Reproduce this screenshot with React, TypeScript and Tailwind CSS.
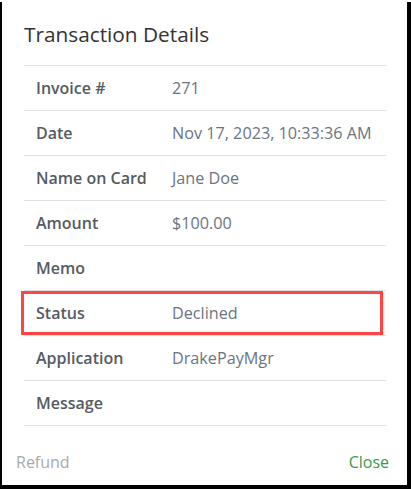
import React from "react";

const rows: { label: string; value: string; highlight?: boolean }[] = [
  { label: "Invoice #", value: "271" },
  { label: "Date", value: "Nov 17, 2023, 10:33:36 AM" },
  { label: "Name on Card", value: "Jane Doe" },
  { label: "Amount", value: "$100.00" },
  { label: "Memo", value: "" },
  { label: "Status", value: "Declined", highlight: true },
  { label: "Application", value: "DrakePayMgr" },
  { label: "Message", value: "" },
];

export default function App() {
  return (
    <div
      className="w-[411px] h-[489px] bg-black"
      style={{ fontFamily: '"Open Sans", "Noto Sans", sans-serif' }}
    >
      <div className="ml-[2px] mt-[2px] w-[405px] h-[483px] bg-white flex flex-col">
        <div className="h-[63px] flex items-center pl-[22px] pt-[2px]">
          <h1 className="text-[20.8px] text-[#333333] leading-none">Transaction Details</h1>
        </div>
        <div className="ml-[22px] w-[362px] border-t border-[#dee2e6]">
          {rows.map((r) => (
            <div
              key={r.label}
              className="relative h-[45px] border-b border-[#dee2e6] flex items-center"
            >
              <div className="w-[148px] pl-[12px] text-[16px] font-semibold text-[#555b61]">
                {r.label}
              </div>
              <div className="text-[16.2px] text-[#6c7480]">{r.value}</div>
              {r.highlight && (
                <div className="absolute left-[-3px] top-[0px] w-[362px] h-[44px] border-[3px] border-[#ff4444]" />
              )}
            </div>
          ))}
        </div>
        <div className="flex items-center justify-between pl-[14px] pr-[18px] h-[58px] pt-[14px]">
          <span className="text-[16px] text-[#aaaaaa]">Refund</span>
          <span className="text-[16px] text-[#3b9a46]">Close</span>
        </div>
      </div>
    </div>
  );
}
